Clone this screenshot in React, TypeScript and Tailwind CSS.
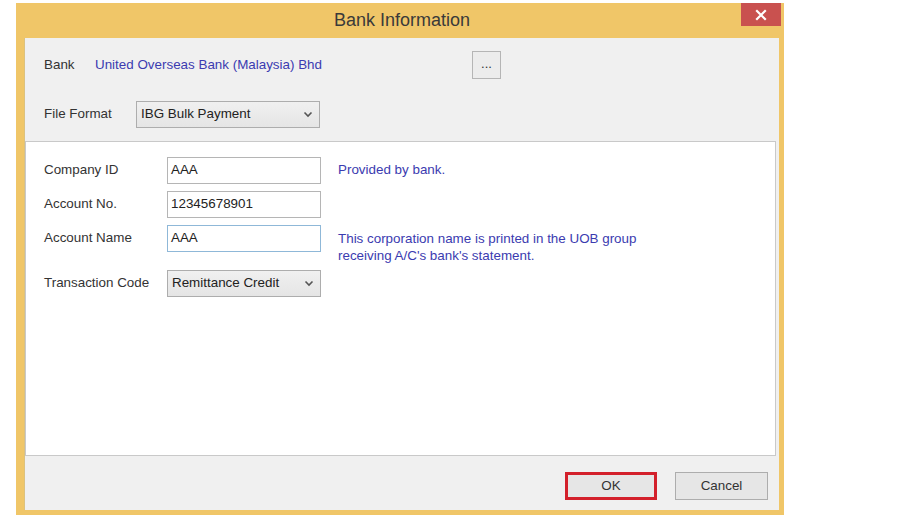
import React from "react";

const font = { fontFamily: '"Liberation Sans", Arial, sans-serif' };

function Chevron() {
  return (
    <svg width="10" height="7" viewBox="0 0 10 7" className="shrink-0">
      <polyline points="1.5,1.5 5,5 8.5,1.5" fill="none" stroke="#555" strokeWidth="1.6" />
    </svg>
  );
}

function Select({ value, w }: { value: string; w: string }) {
  return (
    <div
      className={`${w} h-[27px] flex items-center justify-between pl-[4px] pr-[6px] border border-[#adadad] bg-gradient-to-b from-[#f0f0f0] to-[#e5e5e5] text-[13.4px] text-[#222]`}
    >
      <span>{value}</span>
      <Chevron />
    </div>
  );
}

function Input({ value, focused }: { value: string; focused?: boolean }) {
  return (
    <div
      className={`w-[154px] h-[27px] flex items-center pl-[3px] bg-white border text-[13.4px] text-[#222] ${
        focused ? "border-[#8fb8d8]" : "border-[#b5b5b5]"
      }`}
    >
      {value}
    </div>
  );
}

export default function App() {
  return (
    <div className="w-[903px] h-[520px] bg-white pt-[3px] pl-[16px]" style={font}>
      <div className="w-[768px] h-[512px] bg-[#f0c668] flex flex-col pl-[8px] pr-[5px] pb-[5px]">
        {/* title bar */}
        <div className="h-[35px] flex items-start -ml-[8px] -mr-[5px]">
          <div className="flex-1 pl-[47px] h-[35px] flex items-center justify-center text-[18px] text-[#3a3a3a]">
            Bank Information
          </div>
          <div className="w-[40px] h-[23px] mr-[3px] bg-[#c9514f] flex items-center justify-center">
            <svg width="12" height="12" viewBox="0 0 12 12">
              <path d="M2 2 L10 10 M10 2 L2 10" stroke="#fff" strokeWidth="2.2" strokeLinecap="square" />
            </svg>
          </div>
        </div>
        {/* inner */}
        <div className="flex-1 flex flex-col bg-[#f0f0f0] border-l border-[#dcc27f]">
          {/* top section */}
          <div className="h-[103px] flex flex-col pl-[19px] pt-[13px]">
            <div className="h-[28px] flex items-center text-[13.4px]">
              <span className="w-[51px] text-[#333]">Bank</span>
              <span className="w-[377px] text-[#3b3bb0]">United Overseas Bank (Malaysia) Bhd</span>
              <div className="w-[29px] h-[28px] border border-[#b5b5b5] bg-[#ececec] flex items-center justify-center text-[13px] text-[#333] pb-[3px]">
                ...
              </div>
            </div>
            <div className="mt-[22px] flex items-center text-[13.4px]">
              <span className="w-[92px] text-[#333]">File Format</span>
              <Select value="IBG Bulk Payment" w="w-[184px]" />
            </div>
          </div>
          {/* white panel */}
          <div className="h-[315px] mr-[3px] bg-white border border-[#c9c9c9] pl-[18px] pt-[15px] flex flex-col text-[13.4px]">
            <div className="flex items-center">
              <span className="w-[123px] text-[#333]">Company ID</span>
              <Input value="AAA" />
              <span className="ml-[17px] text-[#3b3bb0]">Provided by bank.</span>
            </div>
            <div className="flex items-center mt-[7px]">
              <span className="w-[123px] text-[#333]">Account No.</span>
              <Input value="12345678901" />
            </div>
            <div className="flex items-start mt-[7px]">
              <span className="w-[123px] h-[27px] flex items-center text-[#333]">Account Name</span>
              <Input value="AAA" focused />
              <span className="ml-[17px] pt-[5px] leading-[17px] text-[#3b3bb0]">
                This corporation name is printed in the UOB group
                <br />
                receiving A/C's bank's statement.
              </span>
            </div>
            <div className="flex items-center mt-[6px]">
              <span className="w-[123px] text-[#333]">Transaction Code</span>
              <Select value="Remittance Credit" w="w-[154px]" />
            </div>
          </div>
          {/* footer */}
          <div className="flex-1 flex items-start justify-end pt-[16px] pr-[11px] gap-[18px] text-[13.4px] text-[#333]">
            <div className="w-[92px] h-[28px] border-[3px] border-[#d3202b] bg-[#e6e6e6] flex items-center justify-center">
              OK
            </div>
            <div className="w-[93px] h-[28px] border border-[#adadad] bg-[#e6e6e6] flex items-center justify-center">
              Cancel
            </div>
          </div>
        </div>
      </div>
    </div>
  );
}
